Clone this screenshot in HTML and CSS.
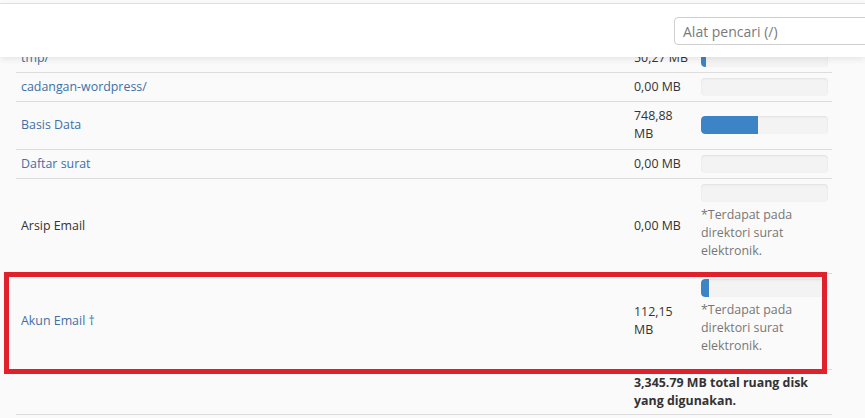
FILE: index.html
```html
<!DOCTYPE html>
<html lang="id">
<head>
<meta charset="utf-8">
<title>Penggunaan Disk</title>
<link rel="stylesheet" href="styles.css">
</head>
<body>
<div class="topline"></div>
<header class="header">
  <input class="search" type="text" placeholder="Alat pencari (/)">
</header>
<main class="content">
  <table class="usage">
    <colgroup>
      <col>
      <col class="col-size">
      <col class="col-bar">
    </colgroup>
    <tbody>
      <tr>
        <td><a href="#">tmp/</a></td>
        <td>50,27 MB</td>
        <td class="bar-cell"><div class="bar"><div class="fill" style="width:4%"></div></div></td>
      </tr>
      <tr>
        <td><a href="#">cadangan-wordpress/</a></td>
        <td>0,00 MB</td>
        <td class="bar-cell"><div class="bar"></div></td>
      </tr>
      <tr class="double">
        <td><a href="#">Basis Data</a></td>
        <td>748,88 MB</td>
        <td class="bar-cell"><div class="bar"><div class="fill" style="width:45%"></div></div></td>
      </tr>
      <tr>
        <td><a href="#">Daftar surat</a></td>
        <td>0,00 MB</td>
        <td class="bar-cell"><div class="bar"></div></td>
      </tr>
      <tr>
        <td class="plain">Arsip Email</td>
        <td>0,00 MB</td>
        <td class="bar-cell"><div class="bar"></div><div class="note">*Terdapat pada direktori surat elektronik.</div></td>
      </tr>
      <tr class="double">
        <td><a href="#">Akun Email †</a></td>
        <td>112,15 MB</td>
        <td class="bar-cell"><div class="bar"><div class="fill" style="width:6%"></div></div><div class="note">*Terdapat pada direktori surat elektronik.</div></td>
      </tr>
      <tr class="total-row">
        <td></td>
        <td class="total" colspan="2">3,345.79 MB total ruang disk yang digunakan.</td>
      </tr>
    </tbody>
  </table>
</main>
<div class="highlight"></div>
</body>
</html>
```

FILE: styles.css
```css
* { box-sizing: border-box; }

html, body {
  margin: 0;
  padding: 0;
}

body {
  position: relative;
  width: 865px;
  height: 418px;
  overflow: hidden;
  background: #fafafa;
  font-family: "Open Sans", "Noto Sans", sans-serif;
  font-size: 12.4px;
  line-height: 18px;
  color: #333;
}

.topline {
  height: 4px;
  background: #fbfbfb;
  border-bottom: 1px solid #e4e4e4;
}

.header {
  position: relative;
  z-index: 2;
  height: 53px;
  background: #fff;
  display: flex;
  justify-content: flex-end;
  align-items: flex-start;
  padding-top: 13px;
  overflow: hidden;
  box-shadow: 0 2px 7px rgba(0, 0, 0, 0.09);
}

.search {
  width: 230px;
  height: 28px;
  margin-right: -39px;
  border: 1px solid #cfcfcf;
  border-radius: 4px;
  padding: 0 8px;
  font-family: "Open Sans", sans-serif;
  font-size: 14px;
  color: #555;
  background: #fff;
}

.search::placeholder {
  color: #7a7a7a;
}

.content {
  position: relative;
  z-index: 1;
  margin-top: -13px;
  padding-left: 16px;
}

.usage {
  width: 816px;
  border-collapse: collapse;
  table-layout: fixed;
}

.col-size { width: 67px; }
.col-bar { width: 136px; }

.usage td {
  padding: 5px;
  vertical-align: middle;
  border-bottom: 1px solid #dddddd;
}

.usage tr.double td {
  padding-bottom: 6px;
}

.usage a {
  color: #3f6fa6;
  text-decoration: none;
}

.usage td.bar-cell {
  padding-right: 4px;
}

.bar {
  height: 18px;
  border-radius: 4px;
  background: #f3f3f3;
  box-shadow: inset 0 1px 2px rgba(0, 0, 0, 0.08);
  overflow: hidden;
}

.fill {
  height: 100%;
  background: #3d84c6;
  border-radius: 4px 0 0 4px;
}

.note {
  margin: 4px 0 8px;
  color: #777;
}

.usage tr.total-row td {
  padding-top: 4px;
  padding-bottom: 4px;
}

.total {
  font-weight: bold;
  color: #333;
}

.highlight {
  position: absolute;
  left: 4px;
  top: 272px;
  width: 823px;
  height: 102px;
  border: 5px solid #e0212b;
  z-index: 3;
  pointer-events: none;
}
```
